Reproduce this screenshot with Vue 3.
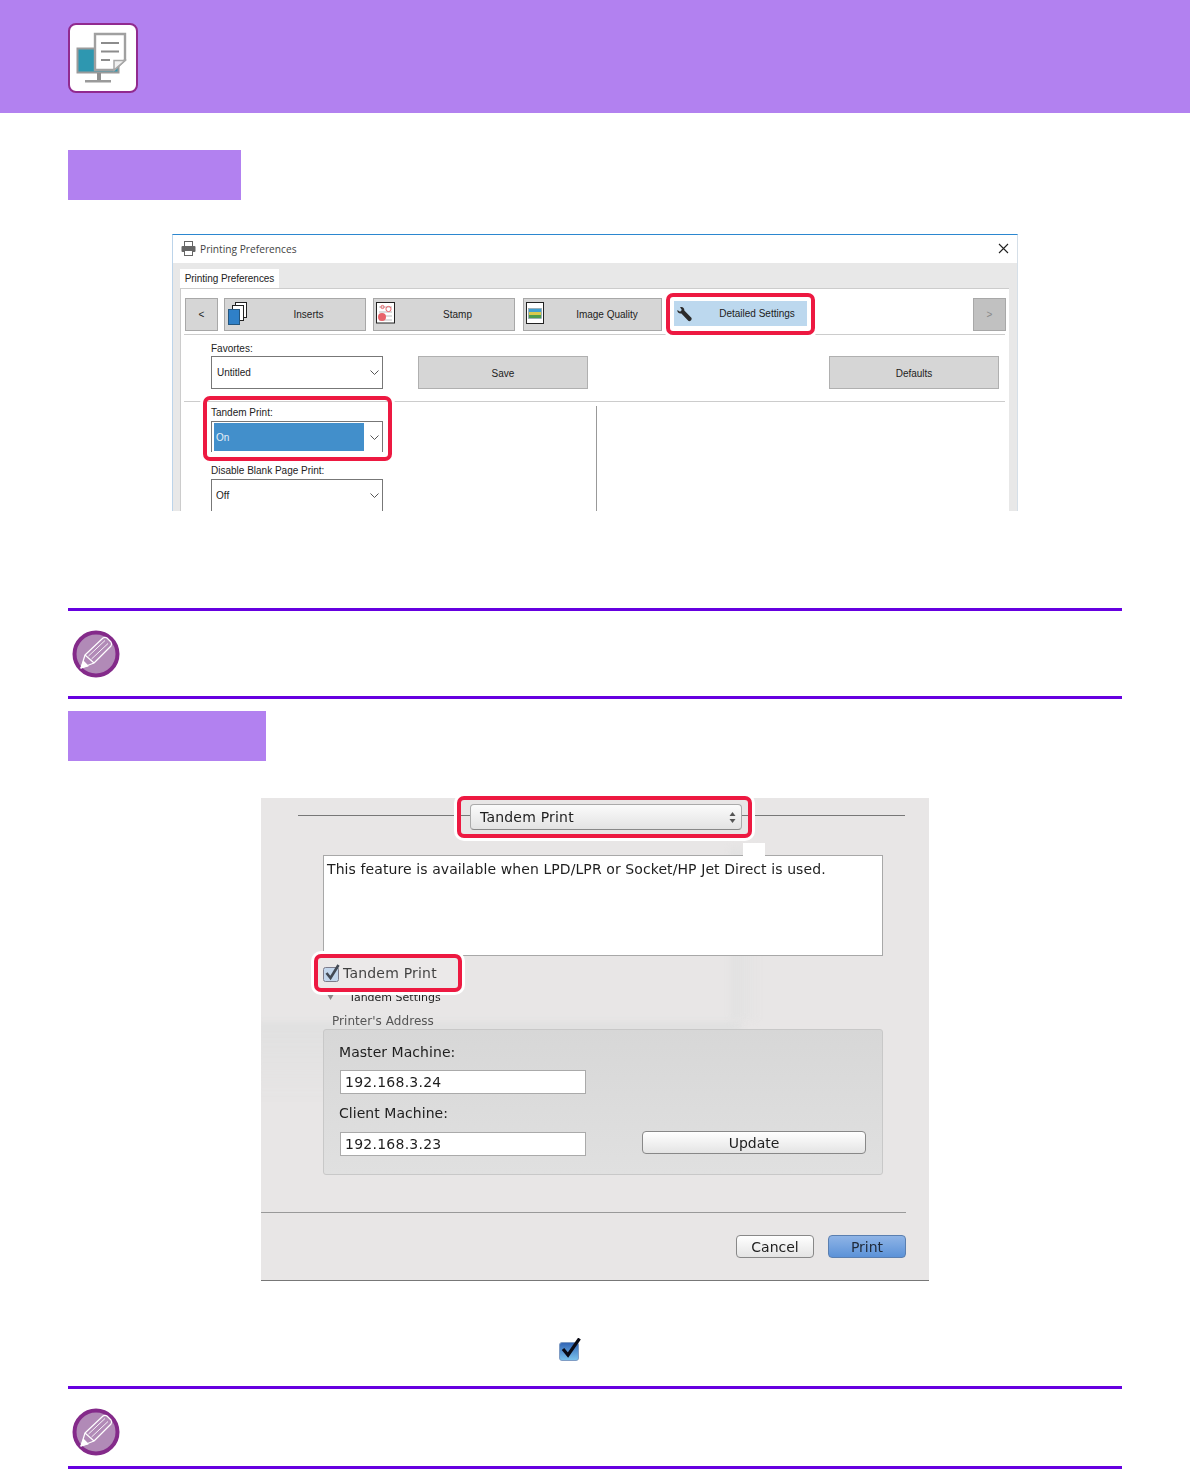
<template>
  <div class="page">
    <header class="top-band">
      <div class="mode-icon">
        <svg width="66" height="66" viewBox="2 2 66 66">
          <rect x="9.500" y="25.500" width="41" height="24" fill="#2e97b0" stroke="#9a9a9a" stroke-width="2" />
          <rect x="29" y="50" width="4" height="8" fill="#8f8f8f" />
          <rect x="17" y="57" width="26" height="2.500" fill="#9a9a9a" />
          <path d="M27 11H57V37L46 47H27Z" fill="#fff" stroke="#a0a0a0" stroke-width="2.400" />
          <path d="M33 20H51M33 28.500H51M33 37H42" stroke="#8c8c8c" stroke-width="1.800" fill="none" />
          <path d="M46 47V37.500H57Z" fill="#f0f0f0" stroke="#a8a8a8" stroke-width="1.500" />
        </svg>
      </div>
    </header>

    <div class="step-tag first"></div>

    <section class="shot shot-one">
      <div class="win">
        <div class="win-title">
          <svg class="printer" width="15" height="15" viewBox="0 0 15 15">
            <rect x="3.500" y="0.500" width="8" height="5" fill="#fff" stroke="#666" />
            <rect x="0.500" y="5" width="14" height="6" rx="1" fill="#666" />
            <rect x="3.500" y="9.500" width="8" height="5" fill="#fff" stroke="#666" />
          </svg>
          <span>Printing Preferences</span>
          <svg class="close" width="11" height="11" viewBox="0 0 11 11">
            <path d="M1 1L10 10M10 1L1 10" stroke="#222" stroke-width="1.100" fill="none" />
          </svg>
        </div>
        <div class="win-body">
          <div class="tab">Printing Preferences</div>
          <div class="panel">
            <div class="toolbar">
              <button class="tool nav">&lt;</button>
              <button class="tool wide">
                <svg class="tool-icon" width="22" height="23" viewBox="0 0 22 23">
                  <rect x="8.500" y="0.500" width="11" height="15" fill="#fff" stroke="#222" />
                  <rect x="5.500" y="3.500" width="11" height="15" fill="#fff" stroke="#222" />
                  <rect x="1.500" y="7.500" width="11" height="15" fill="#2f80c8" stroke="#24567f" />
                </svg>
                Inserts
              </button>
              <button class="tool wide gap-7">
                <svg class="tool-icon" width="20" height="22" viewBox="0 0 20 22">
                  <rect x="0.500" y="0.500" width="18" height="20.500" fill="#fff" stroke="#222" />
                  <path d="M3 5H16M3 10H16M3 14H16M3 18H16" stroke="#aaa" stroke-width="0.800" />
                  <circle cx="12.500" cy="7" r="2.600" fill="none" stroke="#e8636a" />
                  <circle cx="6.500" cy="5" r="1.600" fill="none" stroke="#e8636a" />
                  <circle cx="6" cy="15" r="4" fill="#e8636a" />
                </svg>
                Stamp
              </button>
              <button class="tool quality">
                <svg class="tool-icon" width="18" height="22" viewBox="0 0 18 22">
                  <rect x="0.500" y="0.500" width="17" height="21" fill="#fff" stroke="#222" />
                  <rect x="2.500" y="6.500" width="13" height="10" fill="#3f9fd0" stroke="#999" stroke-width="0.600" />
                  <rect x="3" y="10" width="12" height="3" fill="#d7c94d" />
                  <rect x="3" y="13" width="12" height="3" fill="#4c9c4c" />
                </svg>
                Image Quality
              </button>
              <button class="tool active">
                <svg class="wrench" width="17" height="16" viewBox="0 0 18 18">
                  <path d="M1 4.500L4 6.500L6 4.500L4 1.500C6.500 0.500 9 2 8.800 5L17 13.500C17.500 15.500 15.500 17.500 13.500 17L5.500 8.500C3 9 0.500 7 1 4.500Z" fill="#2b2b2b" />
                </svg>
                Detailed Settings
              </button>
              <button class="tool nav disabled">&gt;</button>
            </div>
            <div class="rule"></div>

            <div class="field-label fav">Favortes:</div>
            <div class="fav-row">
              <div class="combo">
                <span>Untitled</span>
                <svg class="chev" width="9" height="6" viewBox="0 0 9 6"><path d="M0.500 0.500L4.500 4.500L8.500 0.500" fill="none" stroke="#555" /></svg>
              </div>
              <button class="plain-btn save">Save</button>
              <button class="plain-btn defaults">Defaults</button>
            </div>
            <div class="rule second"></div>

            <div class="lower">
              <div class="lower-left">
                <div class="field-label tandem">Tandem Print:</div>
                <div class="combo open">
                  <span class="picked">On</span>
                  <svg class="chev" width="9" height="6" viewBox="0 0 9 6"><path d="M0.500 0.500L4.500 4.500L8.500 0.500" fill="none" stroke="#555" /></svg>
                </div>
                <div class="field-label blank">Disable Blank Page Print:</div>
                <div class="combo off">
                  <span>Off</span>
                  <svg class="chev" width="9" height="6" viewBox="0 0 9 6"><path d="M0.500 0.500L4.500 4.500L8.500 0.500" fill="none" stroke="#555" /></svg>
                </div>
              </div>
              <div class="divider"></div>
            </div>
          </div>
        </div>
      </div>
      <div class="mark mark-tab"></div>
      <div class="mark mark-tandem"></div>
    </section>

    <div class="note first-note">
      <svg class="pencil" width="48" height="48" viewBox="0 0 48 48">
        <circle cx="24" cy="24" r="21.500" fill="#b18ab7" stroke="#842a8a" stroke-width="4" />
        <g fill="none" stroke="#fff" stroke-width="1.200" stroke-linejoin="round">
          <path d="M9 38L13 25L31 8C32.500 7 33.500 7 35 8L39 12C40 13.500 40 14.500 39 16L22 33Z" />
          <path d="M13 25L22 33" />
          <path d="M16.500 26L33 10.500M19.500 29L36 13.500" stroke-width="0.900" />
          <path d="M9 38L16 36L11.500 31.500Z" fill="#fff" />
        </g>
      </svg>
    </div>

    <div class="step-tag second"></div>

    <section class="shot shot-two">
      <div class="mac">
        <div class="mac-shade lower-shade"></div>
        <div class="mac-shade side-shade"></div>
        <div class="mac-top">
          <div class="mac-line left"></div>
          <div class="mac-select">
            <span>Tandem Print</span>
            <svg width="7" height="13" viewBox="0 0 7 13"><path d="M3.500 1L6.500 5H0.500ZM3.500 12L0.500 8H6.500Z" fill="#555" /></svg>
          </div>
          <div class="mac-line right"></div>
        </div>
        <div class="mac-desc">This feature is available when LPD/LPR or Socket/HP Jet Direct is used.</div>
        <label class="mac-check">
          <svg width="17" height="18" viewBox="0 0 17 18">
            <rect x="0.500" y="3.500" width="15" height="14" rx="2" fill="#b9d0ea" stroke="#667" />
            <path d="M3.500 9L7.500 14L15.500 1" fill="none" stroke="#222b38" stroke-width="2.600" />
          </svg>
          <span>Tandem Print</span>
        </label>
        <div class="mac-sub">
          <svg width="7" height="6" viewBox="0 0 7 6"><path d="M0 0H7L3.500 6Z" fill="#8a8a8a" /></svg>
          <span>Tandem Settings</span>
        </div>
        <div class="mac-address">Printer's Address</div>
        <div class="mac-group">
          <div class="mac-label">Master Machine:</div>
          <div class="mac-input">192.168.3.24</div>
          <div class="mac-label client">Client Machine:</div>
          <div class="mac-row">
            <div class="mac-input">192.168.3.23</div>
            <button class="mac-btn update">Update</button>
          </div>
        </div>
        <div class="mac-rule"></div>
        <div class="mac-actions">
          <button class="mac-btn cancel">Cancel</button>
          <button class="mac-btn print">Print</button>
        </div>
      </div>
      <div class="mark mark-select"></div>
      <div class="mark mark-check"></div>
      <div class="patch"></div>
    </section>

    <div class="check-line">
      <svg width="23" height="24" viewBox="0 0 23 24">
        <defs>
          <linearGradient id="tick-fill" x1="0" y1="0" x2="0" y2="1">
            <stop offset="0" stop-color="#2f63b4" />
            <stop offset="1" stop-color="#7cc4ee" />
          </linearGradient>
        </defs>
        <rect x="1.500" y="4.500" width="19" height="18" rx="2.500" fill="url(#tick-fill)" stroke="#7f9cc4" />
        <path d="M5 11L10 17L21.500 0.500" fill="none" stroke="#0a0a14" stroke-width="3.200" />
      </svg>
    </div>

    <div class="note last-note">
      <svg class="pencil" width="48" height="48" viewBox="0 0 48 48">
        <circle cx="24" cy="24" r="21.500" fill="#b18ab7" stroke="#842a8a" stroke-width="4" />
        <g fill="none" stroke="#fff" stroke-width="1.200" stroke-linejoin="round">
          <path d="M9 38L13 25L31 8C32.500 7 33.500 7 35 8L39 12C40 13.500 40 14.500 39 16L22 33Z" />
          <path d="M13 25L22 33" />
          <path d="M16.500 26L33 10.500M19.500 29L36 13.500" stroke-width="0.900" />
          <path d="M9 38L16 36L11.500 31.500Z" fill="#fff" />
        </g>
      </svg>
    </div>
  </div>
</template>

<script setup>
// static page, nothing to compute
</script>

<style>
html,
body {
  margin: 0;
  background: #fff;
}
</style>

<style scoped>
.page {
  position: relative;
  width: 1190px;
  height: 1469px;
  overflow: hidden;
  background: #fff;
  font-family: "Open Sans", sans-serif;
}

button {
  font-family: inherit;
  padding: 0;
}

.top-band {
  height: 113px;
  padding: 23px 0 0 68px;
  box-sizing: border-box;
  background: #b281f0;
}

.mode-icon {
  width: 70px;
  height: 70px;
  box-sizing: border-box;
  background: #fff;
  border: 2px solid #912a8f;
  border-radius: 8px;
}

.mode-icon svg {
  display: block;
}

.step-tag {
  height: 50px;
  margin-left: 68px;
  background: #b281f0;
}

.step-tag.first {
  width: 173px;
  margin-top: 37px;
}

.step-tag.second {
  width: 198px;
  margin-top: 12px;
}

.shot {
  position: relative;
}

.shot-one {
  width: 846px;
  height: 277px;
  margin: 34px 0 0 172px;
}

/* windows print dialog */
.win {
  height: 277px;
  overflow: hidden;
  box-sizing: border-box;
  border-top: 1px solid #2b87d0;
  border-left: 1px solid #bcd4ea;
  border-right: 1px solid #d5dfe8;
  font-family: "Liberation Sans", sans-serif;
  font-size: 10px;
  color: #222;
}

.win-title {
  display: flex;
  align-items: center;
  height: 28px;
  padding: 0 8px 1px;
  box-sizing: border-box;
  background: #fff;
  font-family: "Open Sans", sans-serif;
  font-size: 10.200px;
  color: #444;
}

.printer {
  margin-right: 4px;
}

.close {
  margin-left: auto;
}

.win-body {
  height: 248px;
  padding: 6px 8px 0 7px;
  background: #e8e8e8;
}

.tab {
  width: 99px;
  height: 19px;
  line-height: 20px;
  text-align: center;
  background: #fff;
  letter-spacing: -0.050px;
}

.panel {
  height: 229px;
  box-sizing: border-box;
  background: #fff;
  border-top: 1px solid #ccc;
  border-left: 1px solid #ccc;
}

.toolbar {
  display: flex;
  align-items: flex-start;
  height: 33px;
  padding: 9px 3px 0 4px;
}

.tool {
  position: relative;
  height: 33px;
  box-sizing: border-box;
  background: #d6d6d6;
  border: 1px solid #a8a8a8;
  font-size: 10px;
  color: #222;
}

.nav {
  width: 33px;
}

.wide {
  width: 142px;
  margin-left: 6px;
  padding-left: 27px;
}

.gap-7 {
  margin-left: 7px;
}

.quality {
  width: 139px;
  margin-left: 8px;
  padding-left: 29px;
}

.active {
  width: 133px;
  height: 25px;
  margin: 3px 0 0 12px;
  padding-left: 33px;
  background: #bcd8ee;
  border: 0;
}

.disabled {
  margin-left: auto;
  background: #c1c1c1;
  color: #888;
}

.tool-icon {
  position: absolute;
  left: 2px;
  top: 3px;
}

.wrench {
  position: absolute;
  left: 2px;
  top: 5px;
}

.rule {
  height: 1px;
  margin: 3px 4px 0 3px;
  background: #ccc;
}

.field-label {
  margin-left: 30px;
  height: 13px;
  line-height: 13px;
}

.fav {
  margin-top: 7px;
}

.fav-row {
  display: flex;
  margin-top: 1px;
  padding: 0 10px 0 30px;
}

.combo {
  position: relative;
  width: 172px;
  height: 33px;
  box-sizing: border-box;
  border: 1px solid #777;
  line-height: 31px;
  padding-left: 5px;
  background: #fff;
}

.chev {
  position: absolute;
  right: 3px;
  top: 13px;
}

.plain-btn {
  width: 170px;
  height: 33px;
  box-sizing: border-box;
  padding-top: 2px;
  background: #d6d6d6;
  border: 1px solid #b0b0b0;
  font-size: 10px;
  color: #222;
}

.save {
  margin-left: 35px;
}

.defaults {
  margin-left: auto;
}

.rule.second {
  margin-top: 12px;
}

.lower {
  display: flex;
}

.lower-left {
  width: 415px;
}

.tandem {
  margin-top: 4px;
}

.open {
  height: 31px;
  margin: 2px 0 0 30px;
  border-bottom: 0;
  padding: 1px 0 0 2px;
}

.picked {
  display: block;
  width: 150px;
  height: 28px;
  line-height: 30px;
  padding-left: 2px;
  box-sizing: border-box;
  background: #428fcb;
  color: #e6f0f8;
}

.blank {
  margin-top: 12px;
}

.off {
  margin: 2px 0 0 30px;
  padding-left: 4px;
}

.divider {
  width: 1px;
  height: 106px;
  margin-top: 4px;
  background: #999;
}

/* red callouts sit over the screenshots */
.mark {
  position: absolute;
  box-sizing: border-box;
  border: 4px solid #ed1941;
  border-radius: 7px;
  box-shadow: 0 0 0 3px #fff;
}

.mark-tab {
  left: 494px;
  top: 59px;
  width: 149px;
  height: 42px;
}

.mark-tandem {
  left: 31px;
  top: 162px;
  width: 189px;
  height: 65px;
}

.note {
  width: 1054px;
  height: 91px;
  margin-left: 68px;
  box-sizing: border-box;
  border-top: 3px solid #6600e0;
  border-bottom: 3px solid #6600e0;
  padding: 19px 0 0 4px;
}

.first-note {
  margin-top: 97px;
}

.last-note {
  margin-top: 0;
  height: 83px;
}

.pencil {
  display: block;
}

/* mac print dialog */
.shot-two {
  width: 668px;
  height: 483px;
  margin: 37px 0 0 261px;
}

.mac {
  position: relative;
  height: 483px;
  box-sizing: border-box;
  overflow: hidden;
  background: #e8e6e6;
  border-bottom: 1px solid #777;
  font-family: "DejaVu Sans", sans-serif;
  color: #1e1e1e;
  filter: blur(0.300px);
}

.mac-shade {
  position: absolute;
  filter: blur(3px);
}

.lower-shade {
  left: -6px;
  top: 224px;
  width: 486px;
  height: 80px;
  background: linear-gradient(#e0e0e0, rgba(232, 230, 230, 0));
}

.side-shade {
  left: 470px;
  top: 50px;
  width: 30px;
  height: 172px;
  background: linear-gradient(to right, #e1e1e1, rgba(232, 230, 230, 0));
}

.mac-top {
  position: relative;
  display: flex;
  padding: 6px 0 0 37px;
  width: 607px;
}

.mac-line {
  height: 1px;
  margin-top: 11px;
  background: #777;
}

.mac-line.left {
  width: 172px;
}

.mac-line.right {
  flex: 1;
}

.mac-select {
  display: flex;
  align-items: center;
  justify-content: space-between;
  width: 272px;
  height: 26px;
  box-sizing: border-box;
  padding: 0 5px 0 9px;
  border: 1px solid #aaa;
  border-bottom-color: #888;
  border-radius: 4px;
  background: linear-gradient(#fbfbfb, #e3e3e3);
  font-size: 14px;
  letter-spacing: 0.200px;
}

.mac-desc {
  position: relative;
  width: 560px;
  height: 101px;
  margin: 25px 0 0 62px;
  box-sizing: border-box;
  padding: 4px 0 0 3px;
  background: #fff;
  border: 1px solid #a8a8a8;
  font-size: 14px;
  line-height: 18px;
  white-space: nowrap;
  letter-spacing: 0.090px;
}

.mac-check {
  position: relative;
  display: flex;
  align-items: center;
  gap: 3px;
  height: 18px;
  margin: 8px 0 0 62px;
  font-size: 14px;
  letter-spacing: 0.200px;
}

.mac-sub {
  position: relative;
  display: flex;
  align-items: center;
  height: 14px;
  margin: 8px 0 0 66px;
  font-size: 11px;
}

.mac-sub span {
  margin-left: 15px;
}

.mac-address {
  position: relative;
  height: 15px;
  line-height: 15px;
  margin: 10px 0 0 71px;
  font-size: 12px;
  color: #555;
  letter-spacing: 0.050px;
}

.mac-group {
  position: relative;
  width: 560px;
  height: 146px;
  margin: 0 0 0 62px;
  box-sizing: border-box;
  padding: 13px 16px 0 16px;
  background: linear-gradient(#d7d7d7, #e0e0e0);
  border: 1px solid #c8c8c8;
  border-radius: 3px;
}

.mac-label {
  height: 18px;
  line-height: 18px;
  margin-left: -1px;
  font-size: 14px;
  letter-spacing: 0.050px;
}

.mac-label.client {
  margin-top: 10px;
}

.mac-input {
  width: 246px;
  height: 24px;
  margin-top: 9px;
  box-sizing: border-box;
  padding-left: 4px;
  background: #fff;
  border: 1px solid #aaa;
  font-size: 14px;
  line-height: 23px;
  letter-spacing: 0.250px;
}

.mac-row {
  display: flex;
  align-items: flex-start;
  margin-top: 1px;
}

.mac-btn {
  height: 23px;
  box-sizing: border-box;
  border: 1px solid #888;
  border-radius: 4px;
  background: linear-gradient(#fff, #e4e4e4);
  font-family: "DejaVu Sans", sans-serif;
  font-size: 14px;
  color: #1e1e1e;
}

.update {
  width: 224px;
  margin: 8px 0 0 56px;
}

.mac-rule {
  position: relative;
  width: 645px;
  height: 1px;
  margin-top: 37px;
  background: #999;
}

.mac-actions {
  position: relative;
  display: flex;
  justify-content: flex-end;
  gap: 14px;
  width: 645px;
  margin-top: 22px;
}

.cancel,
.print {
  width: 78px;
}

.print {
  background: linear-gradient(#8fb4e6, #5b92d8);
  border-color: #5a7fb0;
  color: #1f2a3a;
}

.mark-select {
  left: 196px;
  top: -2px;
  width: 295px;
  height: 42px;
}

.mark-check {
  left: 53px;
  top: 156px;
  width: 148px;
  height: 38px;
  background: rgba(255, 255, 255, 0.15);
}

.patch {
  position: absolute;
  left: 482px;
  top: 45px;
  width: 22px;
  height: 13px;
  background: #fff;
}

.check-line {
  height: 105px;
  box-sizing: border-box;
  padding: 57px 0 0 558px;
}

.check-line svg {
  display: block;
}
</style>
